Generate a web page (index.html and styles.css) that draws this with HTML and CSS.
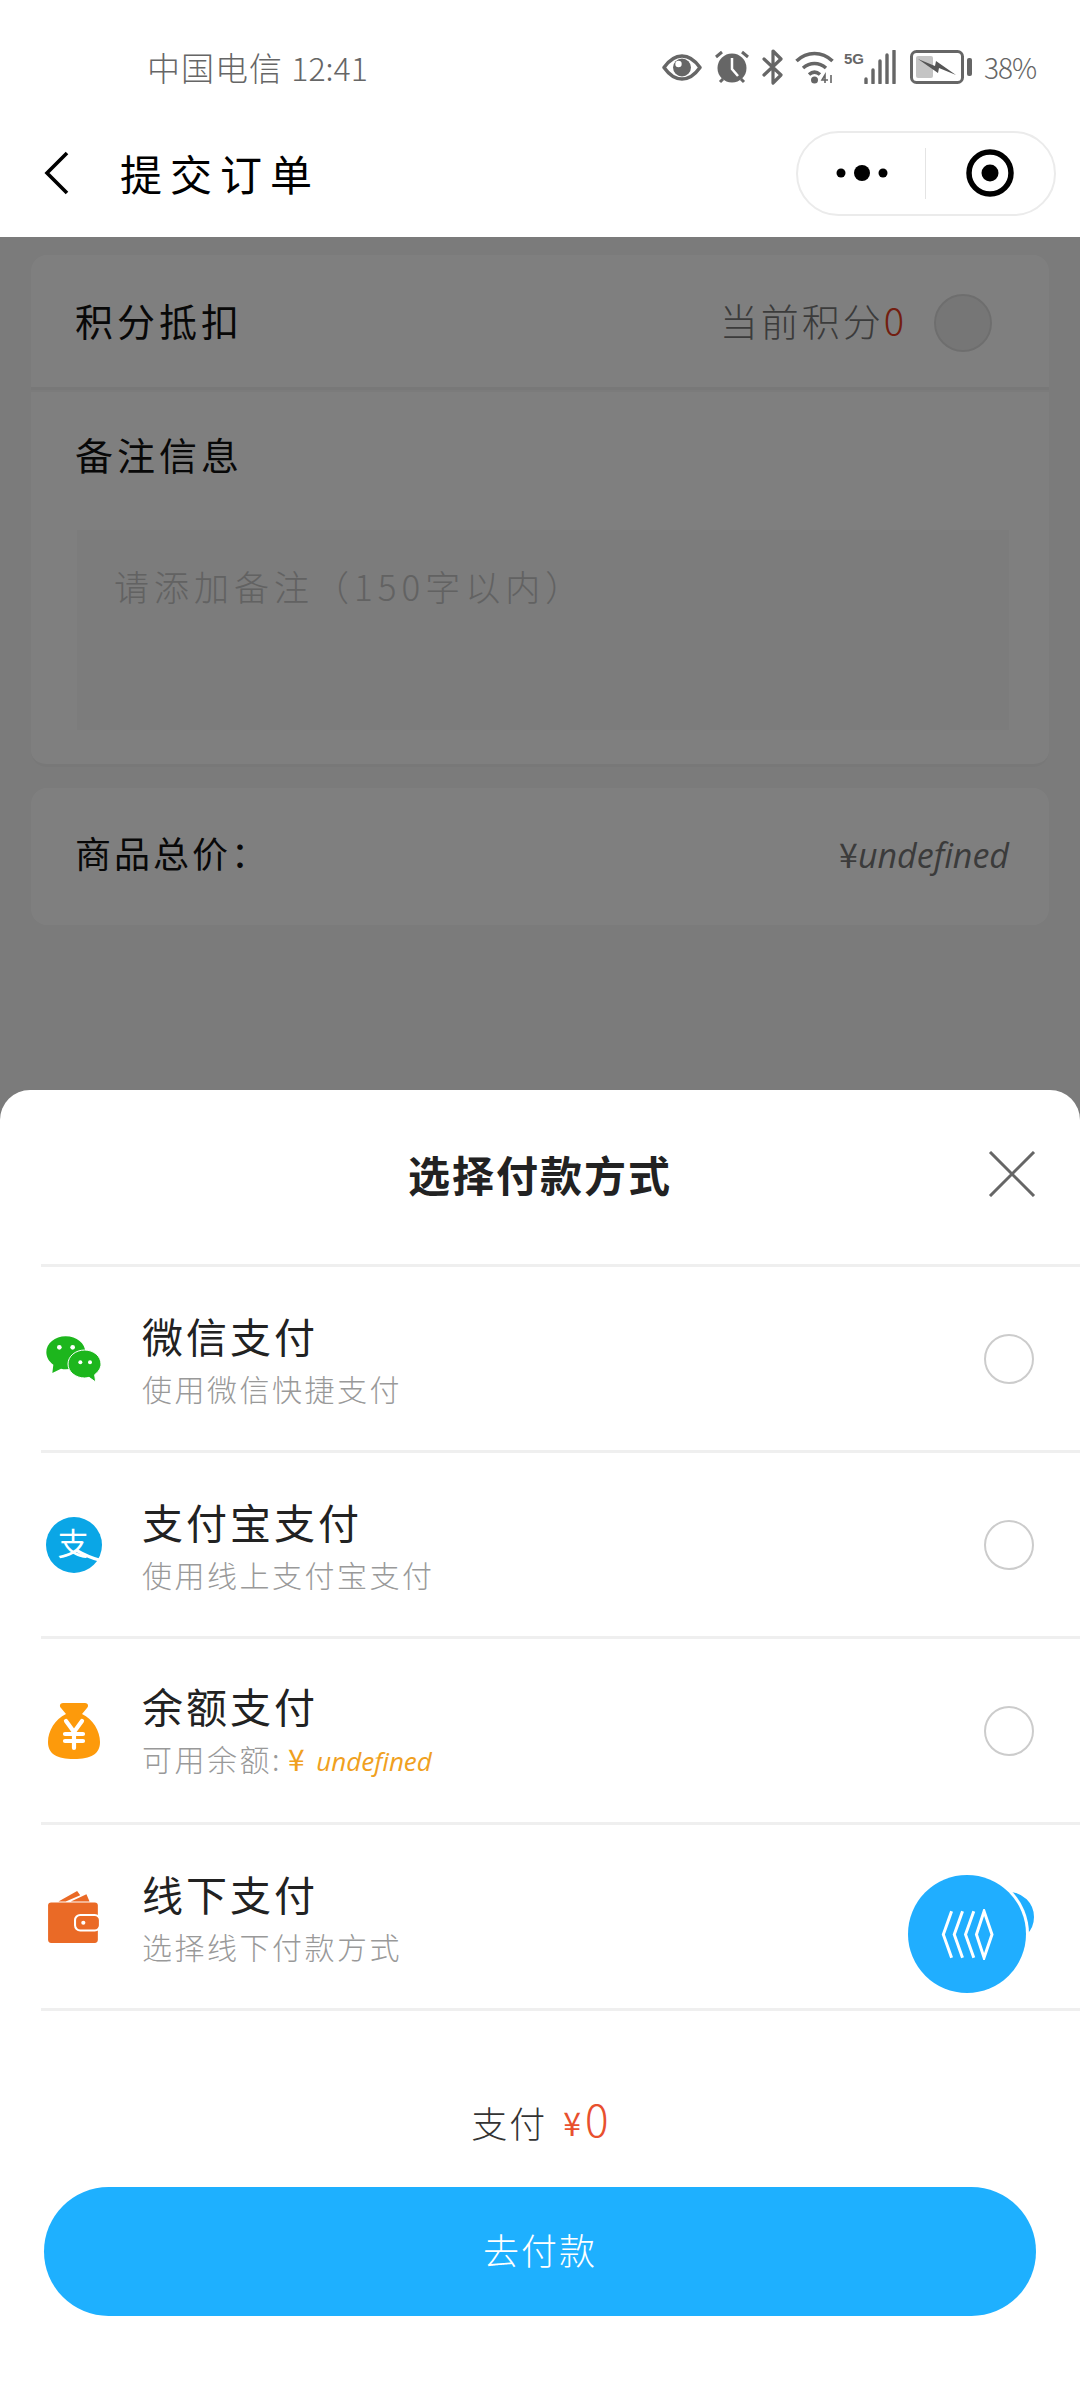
FILE: index.html
```html
<!DOCTYPE html>
<html lang="zh-CN">
<head>
<meta charset="utf-8">
<title>提交订单</title>
<link rel="stylesheet" href="styles.css">
</head>
<body>
<div class="page">
  <header class="header">
    <div class="status">
      <span class="carrier">中国电信 <span class="clock">12:41</span></span>
      <div class="status-icons">
        <svg class="si-eye" viewBox="0 0 40 27"><path d="M2 13.5C8 5 14 2 20 2s12 3 18 11.500C32 22 26 25 20 25S8 22 2 13.500Z" fill="none" stroke="#666" stroke-width="3.500" stroke-linejoin="round"/><circle cx="20" cy="13.500" r="9" fill="#666"/><circle cx="16.500" cy="10" r="3.200" fill="#fff"/></svg>
        <svg class="si-alarm" viewBox="0 0 36 34"><circle cx="18" cy="18" r="14.500" fill="#666"/><path d="M18 8v11l6 7" fill="none" stroke="#fff" stroke-width="2.500"/><path d="M2 7l6-5M34 7l-6-5M6 32l3-3M30 32l-3-3" stroke="#666" stroke-width="3" fill="none"/></svg>
        <svg class="si-bt" viewBox="0 0 21 36"><path d="M2 10l17 16-8 8V2l8 8L2 26" fill="none" stroke="#666" stroke-width="3.200" stroke-linejoin="round" stroke-linecap="round"/></svg>
        <svg class="si-wifi" viewBox="0 0 39 34"><path d="M1.500 11C12 1 27 1 37.500 11M8 18c7-6 16-6 23 0M14 24.500c3.500-3 7.500-3 11 0" fill="none" stroke="#666" stroke-width="3.600"/><circle cx="19.500" cy="30" r="3.500" fill="#666"/><path d="M30 33v-8l-3 5h6M36 25v8" fill="none" stroke="#666" stroke-width="1.600"/></svg>
        <svg class="si-signal" viewBox="0 0 52 34"><text class="si-5g" x="0" y="14">5G</text><path d="M20 33v-4M27 33V20M34 33V11M41 33V5M48 33V1" stroke="#666" stroke-width="3.400" stroke-linecap="round" fill="none" transform="translate(2 0)"/></svg>
        <svg class="si-batt" viewBox="0 0 62 34"><rect x="1.500" y="1.500" width="51" height="31" rx="5" fill="none" stroke="#666" stroke-width="3"/><rect x="6" y="6" width="17" height="22" rx="2" fill="#c4c4c4"/><path d="M8 9l17 7 1-5 20 14-17-7-1 5Z" fill="#555"/><rect x="57" y="8" width="5" height="18" rx="2" fill="#666"/></svg>
        <span class="battery-pct">38%</span>
      </div>
    </div>
    <div class="nav">
      <svg class="back" viewBox="0 0 26 44"><path d="M23 2L3 22l20 20" fill="none" stroke="#000" stroke-width="3.600"/></svg>
      <h1 class="nav-title">提交订单</h1>
      <div class="capsule">
        <div class="capsule-cell capsule-more">
          <svg class="more" viewBox="0 0 52 18"><circle cx="5" cy="9" r="4.500"/><circle cx="26" cy="9" r="8"/><circle cx="47" cy="9" r="4.500"/></svg>
        </div>
        <div class="capsule-cell capsule-target">
          <svg class="target" viewBox="0 0 48 48"><circle cx="24" cy="24" r="21" fill="none" stroke="#000" stroke-width="5.500"/><circle cx="24" cy="24" r="8.500"/></svg>
        </div>
      </div>
    </div>
  </header>

  <main class="content">
    <section class="card card-points">
      <span class="label">积分抵扣</span>
      <div class="points">
        <span class="points-text">当前积分<b class="points-num">0</b></span>
        <span class="toggle"></span>
      </div>
    </section>
    <section class="card card-note">
      <div class="label">备注信息</div>
      <div class="note-box">请添加备注（150字以内）</div>
    </section>
    <section class="card card-total">
      <span class="label label-total">商品总价：</span>
      <span class="price"><span class="yen">¥</span><i class="undef">undefined</i></span>
    </section>
    <div class="mask"></div>
  </main>

  <section class="sheet">
    <div class="sheet-head">
      <h2 class="sheet-title">选择付款方式</h2>
      <svg class="close" viewBox="0 0 48 46"><path d="M2 1l44 44M46 1L2 45" stroke="#666" stroke-width="3" fill="none"/></svg>
    </div>
    <div class="methods">
      <div class="method">
        <svg class="method-icon" viewBox="130 762 168 142"><path d="M189 765c-32 0-58 21-58 48 0 15 8 28 21 37l-3 25 26-13c5 1 9 2 14 2 33 0 59-22 59-51 0-27-26-48-59-48Z" fill="#1db61d"/><path d="M246 806c-28 0-50 19-50 42s22 42 50 42c5 0 9-1 13-2l20 14-3-22c11-8 19-20 19-32 0-23-22-42-49-42Z" fill="#1db61d" stroke="#fff" stroke-width="3"/><circle cx="170" cy="798" r="7" fill="#fff"/><circle cx="210" cy="798" r="7" fill="#fff"/><circle cx="233" cy="843" r="6" fill="#fff"/><circle cx="262" cy="843" r="6" fill="#fff"/></svg>
        <div class="method-text"><div class="method-name">微信支付</div><div class="method-sub">使用微信快捷支付</div></div>
        <span class="radio"></span>
      </div>
      <div class="method">
        <svg class="method-icon" viewBox="0 0 54 54"><circle cx="27" cy="27" r="27" fill="#0aa6e6"/><text class="ali-char" x="26" y="37" text-anchor="middle">支</text><path d="M29 32C36 36 44 40 53 42" fill="none" stroke="#fff" stroke-width="3"/></svg>
        <div class="method-text"><div class="method-name">支付宝支付</div><div class="method-sub">使用线上支付宝支付</div></div>
        <span class="radio"></span>
      </div>
      <div class="method">
        <svg class="method-icon" viewBox="0 0 54 58"><path d="M16 1h22c3 0 4 3 2 5l-5 6c11 5 18 17 18 28 0 12-9 17-26 17S1 52 1 40c0-11 7-23 18-28l-5-6c-2-2-1-5 2-5Z" fill="#fd9a0b"/><path d="M19 19l8 11 8-11M27 30v16M18 32h18M18 39h18" stroke="#fff" stroke-width="4.200" fill="none" stroke-linecap="round"/></svg>
        <div class="method-text"><div class="method-name">余额支付</div><div class="method-sub">可用余额:<span class="balance"><span class="yen">¥</span> <i class="undef">undefined</i></span></div></div>
        <span class="radio"></span>
      </div>
      <div class="method">
        <svg class="method-icon" viewBox="0 0 54 52"><path d="M12 11L30 1l3 4-14 6ZM24 11l15-7 3 7Z" fill="#ea6a26"/><rect x="2" y="12" width="48" height="39" rx="3" fill="#ea6a26"/><rect x="28" y="24" width="24" height="15" rx="5" fill="#ea6a26" stroke="#fff" stroke-width="2"/><circle cx="36" cy="31.500" r="2" fill="#fff"/></svg>
        <div class="method-text"><div class="method-name">线下支付</div><div class="method-sub">选择线下付款方式</div></div>
        <span class="radio radio-on"></span>
      </div>
    </div>
    <div class="total"><span class="total-label">支付</span><span class="total-yen">¥</span><span class="total-num">0</span></div>
    <button class="pay" type="button">去付款</button>
    <div class="fab">
      <svg class="fab-icon" viewBox="238 203 160 154"><path d="M270 210l-25 70 25 70M303 210l-25 70 25 70M337 210l-25 70 25 70M368 210l24 70-24 70-23-70Z" fill="none" stroke="#fff" stroke-width="9" stroke-linejoin="miter"/></svg>
    </div>
  </section>
</div>
</body>
</html>
```

FILE: styles.css
```css
* { box-sizing: border-box; }
html, body { margin: 0; padding: 0; }
body {
  width: 1080px;
  height: 2400px;
  overflow: hidden;
  background: #fff;
  font-family: "Noto Sans CJK SC", "Noto Sans", sans-serif;
  font-weight: 300;
}
.page {
  position: relative;
  width: 1080px;
  height: 2400px;
  display: flex;
  flex-direction: column;
}
h1, h2 { margin: 0; }

/* Header */
.header { background: #fff; }
.status {
  height: 109px;
  padding: 25px 48px 0 147px;
  display: flex;
  align-items: center;
  justify-content: space-between;
  color: #666;
}
.carrier { font-size: 33px; letter-spacing: 1px; line-height: 44px; }
.clock { font-size: 32px; letter-spacing: 0; }
.status-icons { display: flex; align-items: center; gap: 12px; }
.si-eye { width: 40px; height: 27px; }
.si-alarm { width: 36px; height: 34px; }
.si-bt { width: 21px; height: 36px; }
.si-wifi { width: 39px; height: 34px; }
.si-signal { width: 52px; height: 34px; margin-left: -2px; }
.si-5g { font-family: "Liberation Sans Narrow", "Liberation Sans", sans-serif; font-size: 15px; font-weight: 700; fill: #666; }
.si-batt { width: 62px; height: 34px; margin-left: 2px; }
.battery-pct { font-size: 28px; line-height: 36px; letter-spacing: -1px; width: 48px; white-space: nowrap; }

.nav {
  height: 128px;
  padding: 0 24px 0 44px;
  display: flex;
  align-items: center;
}
.back { width: 26px; height: 44px; }
.nav-title {
  margin-left: 50px;
  font-size: 42px;
  font-weight: 400;
  letter-spacing: 8px;
  color: #000;
  line-height: 56px;
}
.capsule {
  margin-left: auto;
  width: 260px;
  height: 85px;
  border: 2px solid #ebebeb;
  border-radius: 43px;
  display: flex;
  align-items: center;
}
.capsule-cell { height: 51px; display: flex; align-items: center; justify-content: center; }
.capsule-more { width: 128px; border-right: 1px solid #e4e4e4; }
.capsule-target { flex: 1; }
.more { width: 52px; height: 18px; fill: #000; }
.target { width: 48px; height: 48px; fill: #000; }

/* Page behind the sheet */
.content {
  position: relative;
  flex: 1;
  background: #f6f6f6;
  padding: 18px 31px 0;
}
.card {
  background: #fff;
  border-radius: 16px;
  padding: 0 46px 0 44px;
}
.card-points {
  height: 135px;
  padding-bottom: 2px;
  display: flex;
  align-items: center;
  justify-content: space-between;
  border-bottom: 3px solid #f0f0f0;
  border-radius: 16px 16px 0 0;
}
.label { font-size: 38px; font-weight: 400; letter-spacing: 4px; color: #111; line-height: 50px; }
.points { display: flex; align-items: center; margin-right: 11px; }
.points-text { font-size: 38px; letter-spacing: 3px; color: #777; line-height: 50px; }
.points-num { font-weight: 300; color: #e63c20; letter-spacing: 0; }
.toggle {
  width: 58px;
  height: 58px;
  margin-left: 30px;
  margin-top: 6px;
  border-radius: 50%;
  background: #ededed;
  border: 2px solid #ddd;
}
.card-note {
  height: 375px;
  margin-top: 2px;
  padding-top: 37px;
  border-radius: 0 0 16px 16px;
  border-bottom: 3px solid #f0f0f0;
}
.note-box {
  margin: 51px 0 0 2px;
  width: 932px;
  height: 200px;
  padding: 33px 37px;
  background: #f8f8f8;
  color: #c4c4c4;
  font-size: 35px;
  line-height: 46px;
  letter-spacing: 5px;
}
.card-total {
  height: 137px;
  margin-top: 21px;
  padding-right: 40px;
  display: flex;
  align-items: center;
  justify-content: space-between;
}
.label-total { font-size: 36px; letter-spacing: 3px; padding-bottom: 10px; }
.price { color: #777; font-size: 34px; line-height: 46px; padding-bottom: 4px; }
.undef { font-family: "Open Sans", sans-serif; font-style: italic; font-weight: 400; }
.yen { font-weight: 400; }
.mask {
  position: absolute;
  inset: 0;
  background: rgba(0, 0, 0, 0.5);
}

/* Payment sheet */
.sheet {
  position: absolute;
  left: 0;
  right: 0;
  top: 1090px;
  bottom: 0;
  background: #fff;
  border-radius: 30px 30px 0 0;
  display: flex;
  flex-direction: column;
}
.sheet-head {
  height: 174px;
  padding: 0 44px 6px;
  display: grid;
  grid-template-columns: 1fr auto 1fr;
  align-items: center;
}
.sheet-title {
  grid-column: 2;
  font-size: 42px;
  font-weight: 700;
  color: #222;
  line-height: 56px;
  letter-spacing: 2px;
}
.close { grid-column: 3; justify-self: end; width: 48px; height: 46px; }
.methods { margin-left: 41px; border-bottom: 3px solid #efefef; }
.method {
  height: 186px;
  padding: 0 46px 0 5px;
  border-top: 3px solid #efefef;
  display: flex;
  align-items: center;
}
.method-icon { width: 56px; height: 58px; flex: none; }
.method-text { margin-left: 40px; flex: 1; }
.method-name { font-size: 41px; font-weight: 400; letter-spacing: 3px; color: #222; line-height: 50px; margin-bottom: 8px; }
.method-sub { font-size: 30px; letter-spacing: 2.500px; color: #999; line-height: 40px; }
.balance { color: #f0a020; margin-left: 6px; }
.balance .undef { font-size: 26px; letter-spacing: 0; }
.radio {
  width: 50px;
  height: 50px;
  border-radius: 50%;
  border: 2px solid #ccc;
  flex: none;
}
.radio-on { background: #20aeff; border-color: #20aeff; }

.total {
  height: 176px;
  padding-top: 46px;
  display: flex;
  align-items: center;
  justify-content: center;
  color: #333;
}
.total-label { font-size: 36px; letter-spacing: 2px; line-height: 48px; }
.total-yen { margin-left: 16px; font-size: 32px; color: #e8502e; font-weight: 400; }
.total-num { margin-left: 4px; padding-bottom: 8px; font-size: 44px; color: #e8502e; line-height: 52px; font-weight: 300; }
.pay {
  margin: 0 44px;
  height: 129px;
  padding: 0 0 6px;
  border: 0;
  border-radius: 65px;
  background: #1eb0ff;
  color: #fff;
  font-family: inherit;
  font-size: 36px;
  font-weight: 300;
  letter-spacing: 2px;
}
.fab {
  position: absolute;
  top: 785px;
  right: 54px;
  width: 118px;
  height: 118px;
  border-radius: 50%;
  background: #20aeff;
  box-shadow: 0 0 0 3px #fff;
  display: flex;
  align-items: center;
  justify-content: center;
}
.fab-icon { width: 53px; height: 51px; }
.ali-char { font-family: "Noto Sans CJK SC", sans-serif; font-size: 30px; fill: #fff; font-weight: 400; }
```
